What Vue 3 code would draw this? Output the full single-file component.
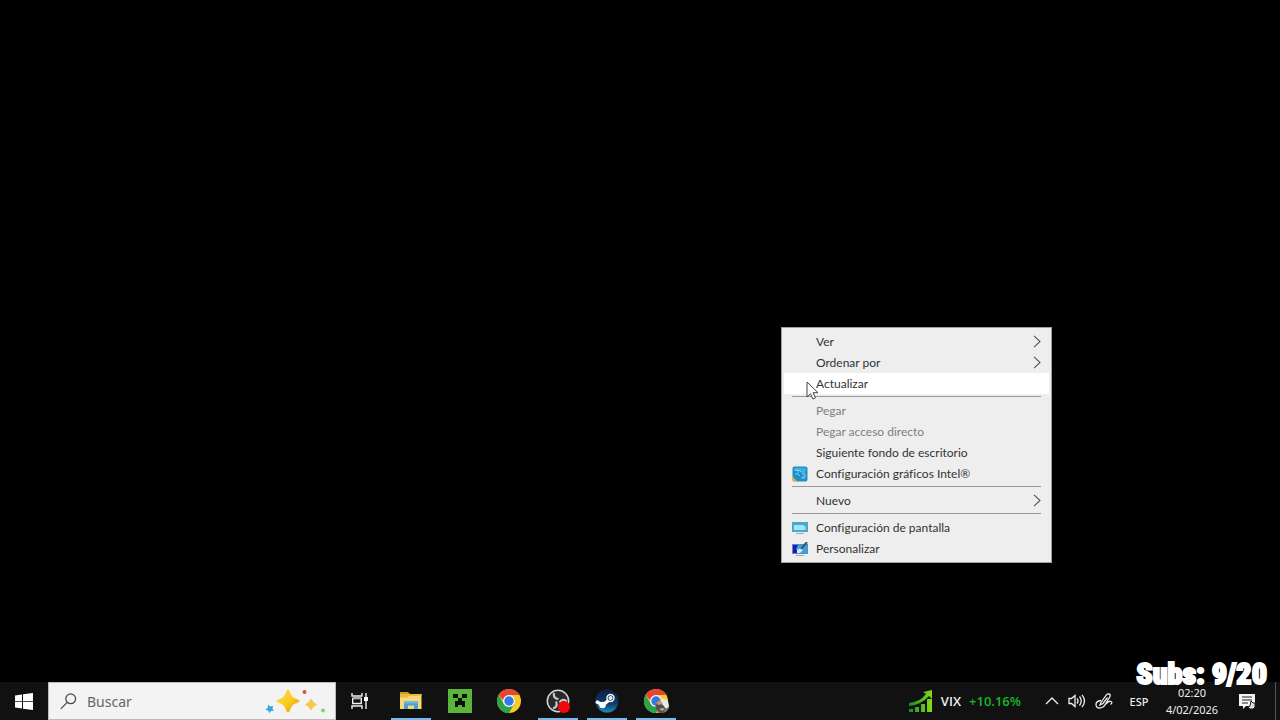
<script setup>
const groups = [
  [
    { label: 'Ver', sub: true },
    { label: 'Ordenar por', sub: true },
    { label: 'Actualizar', active: true },
  ],
  [
    { label: 'Pegar', disabled: true },
    { label: 'Pegar acceso directo', disabled: true },
    { label: 'Siguiente fondo de escritorio' },
    { label: 'Configuración gráficos Intel®', icon: 'intel' },
  ],
  [{ label: 'Nuevo', sub: true }],
  [
    { label: 'Configuración de pantalla', icon: 'display' },
    { label: 'Personalizar', icon: 'personalize' },
  ],
]
const apps = [
  { id: 'explorer', name: 'Explorador de archivos', open: true },
  { id: 'minecraft', name: 'Minecraft', open: false },
  { id: 'chrome', name: 'Google Chrome', open: false },
  { id: 'obs', name: 'OBS Studio', open: true },
  { id: 'steam', name: 'Steam', open: true },
  { id: 'profile', name: 'Google Chrome: perfil', open: true },
]
</script>

<template>
  <div class="screen">
    <main class="desktop">
      <div class="menu" role="menu">
        <div v-for="(group, g) in groups" :key="g" class="group">
          <button
            v-for="item in group"
            :key="item.label"
            class="item"
            :class="{ active: item.active }"
            :disabled="item.disabled"
            role="menuitem"
            type="button"
          >
            <span class="slot">
              <svg v-if="item.icon === 'intel'" width="16" height="16" viewBox="0 0 16 16">
                <rect x=".5" y=".5" width="15" height="15" rx="2" fill="#1f8fca" />
                <path d="M2 2h12v3H2z" fill="#36b0df" />
                <path d="M3 4h4l2 2h4M3 8h3l2 2M10 8h3v3h-3M6 4v3M9 12h4" fill="none" stroke="#7cd4ee" />
                <path d="M0 10l5 5-1 1H2l-2-2z" fill="#d9b64c" />
              </svg>
              <svg v-else-if="item.icon === 'display'" width="16" height="12" viewBox="0 0 16 12">
                <rect x=".5" y=".5" width="15" height="9" fill="#38aee0" stroke="#5f9fbf" />
                <rect x="2" y="3" width="10" height="5" fill="#a9e4f7" />
                <path d="M13 4v4" stroke="#d8f4fc" />
                <path d="M4 11.500h8" stroke="#9ba9b0" />
              </svg>
              <svg v-else-if="item.icon === 'personalize'" width="16" height="14" viewBox="0 0 16 14">
                <rect x=".5" y="2.500" width="15" height="9" fill="#35a5df" stroke="#4c93bf" />
                <path d="M1 3h5l-2 4 3 4H1z" fill="#2b10bd" />
                <path d="M5 8l4-2 2 2-3 3H5z" fill="#e0e5fa" />
                <path d="M9 7l6-7" stroke="#425563" stroke-width="2" />
                <path d="M4 13.500h8" stroke="#9ba9b0" />
              </svg>
            </span>
            <span class="label">{{ item.label }}</span>
            <svg v-if="item.sub" class="arrow" width="8" height="13" viewBox="0 0 8 13">
              <path d="M1 .8l6 5.700-6 5.700" fill="none" stroke="#555" stroke-width="1.100" />
            </svg>
          </button>
        </div>
      </div>
      <svg class="cursor" width="13" height="20" viewBox="0 0 13 20">
        <path d="M1 1v15l3.500-3.300 2.400 5.300 2.500-1.100-2.300-5.200H12z" fill="#fff" stroke="#444" />
      </svg>
    </main>

    <footer class="taskbar">
      <button class="start" type="button" aria-label="Inicio">
        <svg width="18" height="17" viewBox="0 0 18 17">
          <path d="M0 2.500l7-1v6.700H0zM8 1.300L18 0v8.200H8zM0 9h7v6.600l-7-1zM8 9h10v8L8 15.700z" fill="#fff" />
        </svg>
      </button>
      <label class="search">
        <svg width="17" height="17" viewBox="0 0 17 17" aria-label="Buscar">
          <g fill="none" stroke="#444" stroke-width="1.200">
            <circle cx="10.700" cy="5.800" r="4.900" />
            <path d="M7.200 9.400L.8 15.800" />
          </g>
        </svg>
        <input type="text" placeholder="Buscar" aria-label="Buscar" />
        <svg width="62" height="28" viewBox="0 0 62 28">
          <defs>
            <linearGradient id="gold" x1="0" y1="0" x2="1" y2="1">
              <stop offset="0" stop-color="#ffe04a" />
              <stop offset=".55" stop-color="#fbc91d" />
              <stop offset="1" stop-color="#db940d" />
            </linearGradient>
          </defs>
          <path d="M23 2.500q1.500 0 2.200 3 1.300 5 6.500 6.500 3 .8 3 2t-3 2q-5.200 1.500-6.500 6.500-.7 3-2.200 3t-2.200-3q-1.300-5-6.500-6.500-3-.8-3-2t3-2q5.200-1.500 6.500-6.500.7-3 2.200-3z" fill="url(#gold)" />
          <path d="M46 12q1.500 4 5.500 5.500-4 1.500-5.500 5.500-1.500-4-5.500-5.500 4-1.500 5.500-5.500z" fill="#f6ca48" stroke="#f6ca48" stroke-linejoin="round" />
          <path d="M3 17.500l2.200 2 3-.8-.8 2.700 1.600 2.400-3 .2-1.700 2.200-1.100-2.700-2.900-.8 2.500-1.900z" fill="#36a7df" />
          <circle cx="39.500" cy="5" r="2" fill="#dc5244" />
          <circle cx="58" cy="23.500" r="2" fill="#8bcf67" />
        </svg>
      </label>
      <button class="taskview" type="button" aria-label="Vista de tareas">
        <svg width="18" height="16" viewBox="0 0 18 16">
          <g fill="none" stroke="#eee" stroke-width="1.400">
            <path d="M1 0v3h10V0M1 16v-3h10v3M1.700 5.500h8.600v5H1.700zM15 0v16" />
          </g>
          <path d="M2 4h8v2H2z" fill="#aaa" />
          <path d="M13 4h4v4h-4z" fill="#fff" />
        </svg>
      </button>

      <nav class="apps">
        <button v-for="app in apps" :key="app.id" class="app" :class="{ open: app.open }" type="button" :aria-label="app.name">
          <svg v-if="app.id === 'explorer'" width="22" height="20" viewBox="0 0 22 20">
            <path d="M0 1h8l2 2h-10z" fill="#d99a13" />
            <path d="M0 3h21.500v15H0z" fill="#f8d775" />
            <path d="M0 3h21.500v2H9l-2 1.500H0z" fill="#eab93d" />
            <path d="M4 10.500h14V18h-4v-3.500H8V18H4z" fill="#4a9fd5" />
            <path d="M4 10.500h14v2H4z" fill="#69b7e5" />
          </svg>
          <svg v-else-if="app.id === 'minecraft'" width="24" height="24" viewBox="0 0 24 24">
            <path d="M0 0h24v24H0z" fill="#5bb53b" />
            <path d="M5 5h5v4H5zM14 5h5v4h-5zM10 9h4v3h3v6h-3v-2h-4v2H7v-6h3z" fill="#091208" />
          </svg>
          <svg v-else-if="app.id === 'chrome' || app.id === 'profile'" class="round" width="26" height="26" viewBox="0 0 26 26">
            <circle cx="13" cy="13" r="12" fill="#f9c927" />
            <path d="M2.600 7A12 12 0 0 1 23.400 7H13v12z" fill="#e74434" />
            <path d="M2.600 7A12 12 0 0 0 13 25l5.200-9H7.800z" fill="#2ba24c" />
            <circle cx="13" cy="13" r="6" fill="#f5f8ff" />
            <circle cx="13" cy="13" r="4.700" fill="#2d7bea" />
            <g v-if="app.id === 'profile'">
              <circle cx="19" cy="18" r="7" fill="#89756a" />
              <path d="M17 12q4-3 8 1l1 6-4 2-3-5z" fill="#e7e8e7" />
              <path d="M13 17q4-3 7 0l3 4-4 4q-5-1-6-5z" fill="#554f50" />
              <path d="M14 14l4-1 2 3-5 1z" fill="#c39a82" />
              <path d="M16 21l4-1 2 1-3 2z" fill="#b9a8a2" />
            </g>
          </svg>
          <svg v-else-if="app.id === 'obs'" width="26" height="24" viewBox="0 0 26 24">
            <circle cx="13" cy="12" r="10.700" fill="#29292c" stroke="#d4d4d4" stroke-width="1.500" />
            <g fill="none" stroke="#c9c9cc" stroke-width="2.200">
              <path d="M9 4q-1 5.500 4.500 6" />
              <path d="M9 4q-1 5.500 4.500 6" transform="rotate(120 13 12)" />
              <path d="M9 4q-1 5.500 4.500 6" transform="rotate(240 13 12)" />
            </g>
            <circle cx="19" cy="18" r="6" fill="#f10909" />
          </svg>
          <svg v-else width="26" height="24" viewBox="0 0 26 24">
            <defs>
              <linearGradient id="steamBlue" x1="0" y1="0" x2="0" y2="1">
                <stop offset="0" stop-color="#101c48" />
                <stop offset=".6" stop-color="#0b3a69" />
                <stop offset="1" stop-color="#238ac3" />
              </linearGradient>
            </defs>
            <circle cx="13" cy="12" r="11.500" fill="url(#steamBlue)" />
            <path d="M2 12.500l7 3.500 6-5" fill="none" stroke="#fff" stroke-width="3.500" />
            <circle cx="8.500" cy="16" r="3.300" fill="#fff" />
            <circle cx="16.500" cy="9" r="4.200" fill="#fff" />
            <circle cx="16.500" cy="9" r="2.500" fill="#e8edf3" stroke="#274061" stroke-width=".9" />
          </svg>
        </button>
      </nav>

      <button class="stock" type="button">
        <svg width="24" height="22" viewBox="0 0 24 22">
          <defs>
            <linearGradient id="rise" x1="0" y1="0" x2="1" y2="0">
              <stop offset="0" stop-color="#168e22" />
              <stop offset="1" stop-color="#86dc18" />
            </linearGradient>
          </defs>
          <path d="M0 19h4v3H0zM6 17h4v5H6zM12 14h4v8h-4zM18 9h5v13h-5z" fill="url(#rise)" />
          <path d="M0 13Q11 12 17 4l-3-2 9-2v9l-3-3Q12 15 0 16z" fill="url(#rise)" />
        </svg>
        <span>VIX</span>
        <span class="gain">+10.16%</span>
      </button>
      <div class="tray">
        <button type="button" aria-label="Mostrar iconos ocultos">
          <svg width="14" height="8" viewBox="0 0 14 8"><path d="M1 7l6-6 6 6" fill="none" stroke="#eee" stroke-width="1.400" /></svg>
        </button>
        <button type="button" aria-label="Volumen">
          <svg width="18" height="14" viewBox="0 0 18 14">
            <path d="M1 4.500h2.500L7 1.500v11L3.500 9.500H1zM9 4.500q2 2.500 0 5M11.500 2.500q3.500 4.500 0 9M14 .8q5 6.200 0 12.400" fill="none" stroke="#eee" stroke-width="1.300" />
          </svg>
        </button>
        <button type="button" aria-label="Lápiz">
          <svg width="18" height="16" viewBox="0 0 18 16">
            <path d="M6 7.500Q1 8 1 11.500 1 15 4.500 15q4 0 6-4l4-6.500Q16 1.500 14 1t-3.500 2L6 9.500 5 12l3-1.500 4.500-6M11 11q3-3.500 5-2.500t-.5 3" fill="none" stroke="#eee" stroke-width="1.300" />
          </svg>
        </button>
      </div>
      <button class="lang" type="button">ESP</button>
      <button class="clock" type="button"><span>02:20</span><span>4/02/2026</span></button>
      <button class="notices" type="button" aria-label="Notificaciones">
        <svg width="18" height="17" viewBox="0 0 18 17">
          <path d="M1 1h16v12H8l-3 3v-3H1z" fill="#f4f4f4" />
          <path d="M4 4h10M4 7h10M4 10h6" stroke="#222" stroke-width="1.100" />
          <path d="M13 8l2 2h2v4l-2 2h-3l-2-2 2-1z" fill="#ddd" stroke="#222" />
        </svg>
      </button>
      <button class="peek" type="button" aria-label="Mostrar escritorio"></button>
    </footer>
    <div class="subs">Subs: 9/20</div>
  </div>
</template>

<style>
body { background: #000; }
</style>

<style scoped>
.screen {
  position: relative;
  display: flex;
  flex-direction: column;
  height: 100vh;
  overflow: hidden;
  background: #000;
  font-family: "Noto Sans", "Open Sans", sans-serif;
  font-size: 11px;
}
.desktop { position: relative; flex: 1; }
button {
  display: flex;
  align-items: center;
  justify-content: center;
  margin: 0;
  padding: 0;
  border: 0;
  background: none;
  color: #eee;
  font: inherit;
}
svg { flex: none; display: block; }
.menu {
  position: absolute;
  left: 781px;
  top: 327px;
  box-sizing: border-box;
  width: 271px;
  padding: 3px 2px;
  border: 1px solid #a0a0a0;
  background: #eee;
  font: 12px Lato, sans-serif;
  font-variant-ligatures: none;
}
.group + .group::before {
  content: "";
  display: block;
  height: 1px;
  margin: 2px 8px 3px;
  background: #999;
}
.item {
  width: 100%;
  height: 21px;
  padding: 0 8px;
  color: #333;
  text-align: left;
}
.item.active { background: #fff; }
.item:disabled { color: #808080; }
.slot { display: flex; width: 16px; margin-right: 8px; }
.label { flex: 1; white-space: nowrap; }
.cursor { position: absolute; left: 806px; top: 381px; }
.taskbar {
  display: flex;
  height: 38px;
  background: #111;
}
.start { width: 48px; }
.search {
  display: flex;
  align-items: center;
  box-sizing: border-box;
  width: 288px;
  padding: 0 8px 0 11px;
  border: 1px solid #bbb;
  background: #f3f3f3;
}
.search input {
  flex: 1;
  min-width: 0;
  padding: 0 0 0 10px;
  border: 0;
  outline: 0;
  background: none;
  font: 14px "Noto Sans", sans-serif;
}
.search input::placeholder { color: #666; opacity: 1; }
.taskview { width: 48px; }
.apps { display: flex; flex: 1; margin-left: 2px; }
.app { position: relative; width: 49px; }
.app.open::after {
  content: "";
  position: absolute;
  right: 4px;
  bottom: 0;
  left: 5px;
  height: 2px;
  background: #76b9ed;
}
.stock { gap: 8px; margin-right: 24px; font-family: "Open Sans", sans-serif; font-size: 13px; font-weight: 600; }
.gain { color: #18b927; }
.tray { display: flex; gap: 9px; }
.lang { width: 52px; font-weight: 500; }
.clock { flex-direction: column; width: 54px; line-height: 17px; }
.notices { width: 56px; }
.peek { width: 5px; border-left: 1px solid #555; }
.subs {
  position: absolute;
  right: 13px;
  bottom: 28px;
  color: #fff;
  font: 900 30px/36px "Roboto Condensed", Roboto, sans-serif;
  -webkit-text-stroke: 2px #fff;
  white-space: nowrap;
}
</style>
